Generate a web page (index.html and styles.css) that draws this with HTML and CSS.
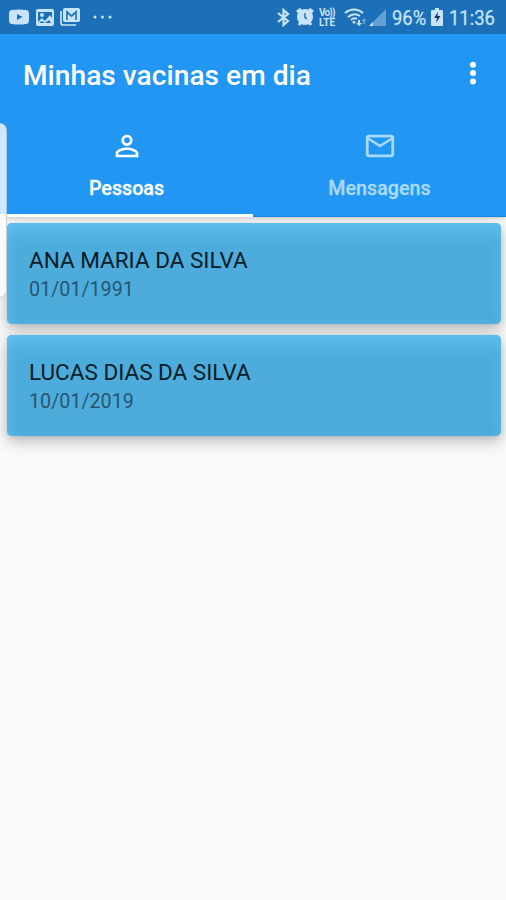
FILE: index.html
```html
<!DOCTYPE html>
<html lang="pt-BR">
<head>
<meta charset="utf-8">
<title>Minhas vacinas em dia</title>
<link rel="stylesheet" href="styles.css">
</head>
<body>
<div class="screen">
  <header class="status">
    <div class="status-group notifications">
      <svg width="20" height="16" viewBox="0 0 20 16"><path fill="currentColor" fill-rule="evenodd" d="M3 1Q10 0 17 1Q20 1 20 5V11Q20 15 17 15Q10 16 3 15Q0 15 0 11V5Q0 1 3 1ZM8 5V11L13.500 8Z"/></svg>
      <svg width="18" height="17" viewBox="0 0 18 17"><path fill="currentColor" fill-rule="evenodd" d="M2 0H16Q18 0 18 2V15Q18 17 16 17H2Q0 17 0 15V2Q0 0 2 0ZM2 3V13L6 9L9 12L14 6L16 9V3ZM3 14H15L13 11L9 14L6 12ZM6 4A2 2 0 1 1 6 8A2 2 0 1 1 6 4Z"/></svg>
      <svg width="20" height="18" viewBox="0 0 20 18"><path fill="none" stroke="currentColor" stroke-width="1.700" d="M1 3V15Q1 17 3 17H16"/><rect x="3" width="17" height="14" rx="2" fill="currentColor"/><path fill="none" stroke="#2475b7" stroke-width="1.700" d="M7 12V4L11.500 8L16 4V12"/></svg>
      <svg class="more" width="19" height="4" viewBox="0 0 19 4" fill="currentColor"><circle cx="2" cy="2" r="1.500"/><circle cx="9.500" cy="2" r="1.500"/><circle cx="17" cy="2" r="1.500"/></svg>
    </div>
    <div class="status-group system">
      <svg class="bluetooth" width="13" height="19" viewBox="0 0 13 19"><path fill="none" stroke="currentColor" stroke-width="2.200" d="M1 5L11 13L6.500 17V2L11 6L1 14"/></svg>
      <svg class="alarm" width="18" height="18" viewBox="0 0 18 18"><path stroke="currentColor" stroke-width="3" d="M1 4L5 1M17 4L13 1M3 17L5 14M15 17L13 14"/><circle cx="9" cy="9" r="8" fill="currentColor"/><path fill="none" stroke="#2475b7" stroke-width="1.500" d="M9 5V9.500L11 11"/></svg>
      <div class="volte"><span>Vo))</span><span>LTE</span></div>
      <svg class="wifi" width="23" height="18" viewBox="0 0 23 18"><g fill="none" stroke="currentColor" stroke-width="2"><path d="M1 5Q10 -2 19 5M4 9Q10 4 16 8M7 12Q10 9 13 11"/></g><path fill="currentColor" d="M8 14Q10 12 12 14L10 16ZM14 12H16V15H18L15 18L12 15H14Z"/><path fill="currentColor" opacity=".4" d="M19 16V13H17L20 10L23 13H21V16Z"/></svg>
      <svg class="signal" width="17" height="17" viewBox="0 0 17 17"><path fill="currentColor" opacity=".42" d="M0 17L17 0V17Z"/><path fill="currentColor" d="M0 17L4 13V17Z"/></svg>
      <span class="battery-text">96%</span>
      <svg class="battery" width="12" height="18" viewBox="0 0 12 18"><path fill="currentColor" d="M4 0H8V2H11Q12 2 12 3V17Q12 18 11 18H1Q0 18 0 17V3Q0 2 1 2H4Z"/><path fill="#123d66" d="M7 4L3 10H6L5 15L9.500 8H6.500Z"/></svg>
      <span class="clock">11:36</span>
    </div>
  </header>
  <div class="toolbar">
    <h1>Minhas vacinas em dia</h1>
    <svg class="menu" width="8" height="24" viewBox="0 0 8 24" fill="#fff"><circle cx="4" cy="3.700" r="3"/><circle cx="4" cy="12.100" r="3"/><circle cx="4" cy="20.500" r="3"/></svg>
  </div>
  <nav class="tabs">
    <div class="tab active">
      <svg width="34" height="34" viewBox="0 0 24 24"><path fill="currentColor" d="M12 5.900c1.160 0 2.100.94 2.100 2.100s-.94 2.100-2.100 2.100S9.900 9.160 9.900 8s.94-2.100 2.100-2.100m0 9c2.970 0 6.100 1.460 6.100 2.100v1.100H5.900V17c0-.64 3.130-2.100 6.100-2.100M12 4C9.790 4 8 5.790 8 8s1.790 4 4 4 4-1.790 4-4-1.790-4-4-4zm0 9c-2.670 0-8 1.340-8 4v3h16v-3c0-2.660-5.330-4-8-4z"/></svg>
      <span>Pessoas</span>
    </div>
    <div class="tab">
      <svg width="34" height="34" viewBox="0 0 24 24"><path fill="currentColor" d="M22 6c0-1.100-.9-2-2-2H4c-1.100 0-2 .9-2 2v12c0 1.100.9 2 2 2h16c1.100 0 2-.9 2-2V6zm-2 0l-8 5-8-5h16zm0 12H4V8l8 5 8-5v10z"/></svg>
      <span>Mensagens</span>
    </div>
  </nav>
  <main class="people">
    <article class="card"><h2>ANA MARIA DA SILVA</h2><p>01/01/1991</p></article>
    <article class="card"><h2>LUCAS DIAS DA SILVA</h2><p>10/01/2019</p></article>
  </main>
  <div class="edge-handle"></div>
</div>
</body>
</html>
```
FILE: styles.css
```css
* { box-sizing: border-box; }
body { margin: 0; font-family: Roboto, sans-serif; }
h1, h2, p { margin: 0; }
svg { display: block; flex: none; }
.screen {
  position: relative;
  display: flex;
  flex-direction: column;
  width: 506px;
  height: 900px;
  overflow: hidden;
  background: #fafafa;
}
.status {
  display: flex;
  justify-content: space-between;
  height: 34px;
  padding: 0 11px 0 9px;
  color: #c8e3fa;
  background: #1b70b7;
}
.status-group { display: flex; align-items: center; }
.notifications { gap: 7px; }
.notifications svg:nth-child(3) { margin-left: -1px; }
.more { margin-left: 6px; }
.bluetooth { margin-right: 1px; }
.alarm { margin-left: 5px; }
.volte {
  display: flex;
  flex-direction: column;
  gap: 1px;
  width: 18px;
  margin-left: 5px;
  font-size: 10px;
  font-weight: 700;
  line-height: 9px;
  white-space: nowrap;
}
.volte span { height: 9px; }
.volte span:first-child { letter-spacing: -0.8px; }
.wifi { margin-left: 7px; }
.signal { margin-left: 2px; }
.battery-text, .clock {
  display: block;
  font-size: 20.5px;
  line-height: 34px;
  transform: scaleX(.9);
  transform-origin: left;
  white-space: nowrap;
  padding-top: 2px;
  -webkit-text-stroke: .25px currentColor;
}
.battery-text { width: 34px; margin-left: 6px; }
.battery { margin-left: 5px; }
.clock { width: 46px; margin-left: 6px; }
.toolbar {
  display: flex;
  align-items: center;
  justify-content: space-between;
  height: 79px;
  padding: 4px 29px 0 23px;
  color: #fff;
  background: #2196f3;
}
.toolbar h1 { font-size: 28.1px; font-weight: 500; line-height: 36px; letter-spacing: .04px; white-space: nowrap; }
.menu { margin-top: -5px; }
.tabs {
  display: grid;
  grid-template-columns: 1fr 1fr;
  height: 104px;
  background: #2196f3;
  z-index: 1;
  box-shadow: 0 3px 3px -1px rgba(0,0,0,.15);
}
.tab {
  display: flex;
  flex-direction: column;
  align-items: center;
  padding-top: 16px;
  color: #a8dafb;
  font-size: 19.7px;
  font-weight: 500;
  line-height: 24px;
  border-bottom: 1px solid #1585e1;
}
.tab span { margin-top: 14px; -webkit-text-stroke: .3px currentColor; }
.tab.active { color: #fff; border-bottom: 3px solid #fff; }
.people {
  display: flex;
  flex-direction: column;
  gap: 11.5px;
  padding: 5.5px 5px 0 6.5px;
}
.card {
  height: 101px;
  padding: 23px 22.5px 0;
  border-radius: 5px;
  background: #4dacdc;
  box-shadow: 0 5px 16px rgba(0,0,0,.26), 0 2px 5px rgba(0,0,0,.08), inset 0 14px 16px -4px #5dbfed, inset 5px 0 14px -6px #5abbe9;
}
.card h2 { color: #071b26; font-size: 22.5px; font-weight: 400; line-height: 28px; white-space: nowrap; }
.card p { color: #25566f; font-size: 19.7px; line-height: 24px; margin-top: 4px; }
.edge-handle {
  position: absolute;
  top: 123px;
  left: -10px;
  width: 17px;
  height: 175px;
  border: 1px solid rgba(150,165,175,.5);
  border-radius: 7px;
  background: rgba(255,255,255,.78);
  z-index: 2;
  clip-path: inset(0 0 0 10px);
}
```
